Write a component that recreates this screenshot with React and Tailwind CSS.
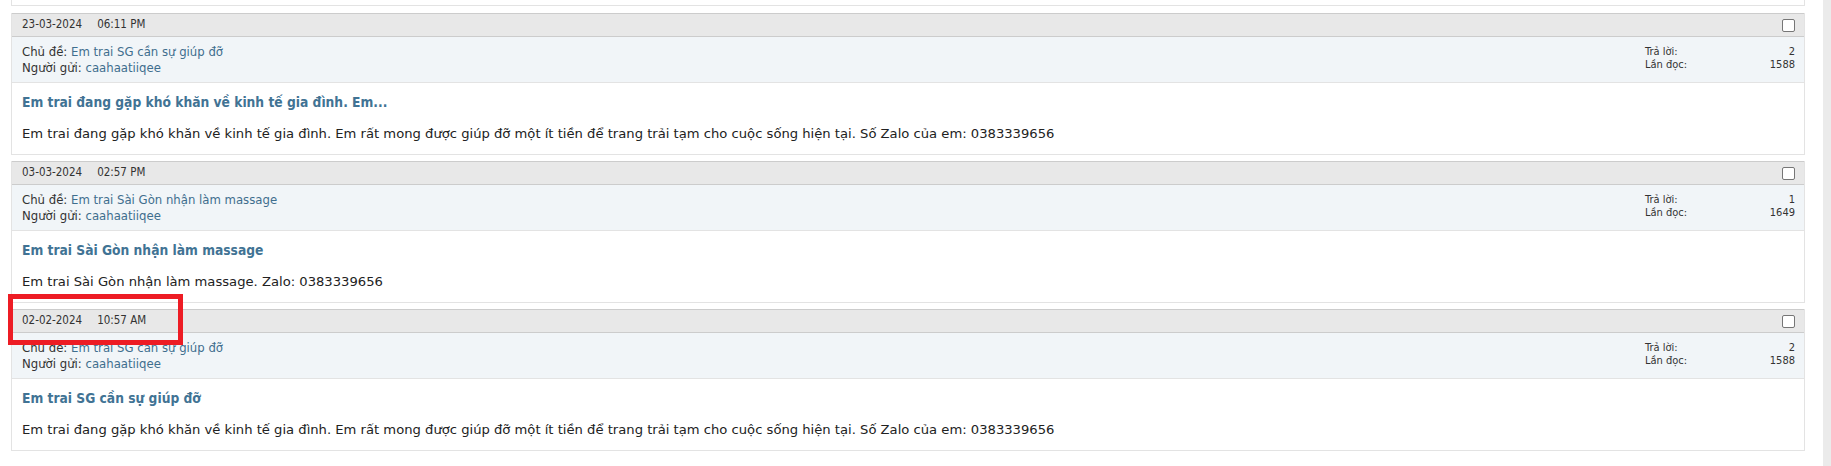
import React from "react";

const posts = [
  {
    date: "23-03-2024",
    time: "06:11 PM",
    topic: "Em trai SG cần sự giúp đỡ",
    user: "caahaatiiqee",
    replies: "2",
    views: "1588",
    title: "Em trai đang gặp khó khăn về kinh tế gia đình. Em...",
    body: "Em trai đang gặp khó khăn về kinh tế gia đình. Em rất mong được giúp đỡ một ít tiền để trang trải tạm cho cuộc sống hiện tại. Số Zalo của em: 0383339656",
  },
  {
    date: "03-03-2024",
    time: "02:57 PM",
    topic: "Em trai Sài Gòn nhận làm massage",
    user: "caahaatiiqee",
    replies: "1",
    views: "1649",
    title: "Em trai Sài Gòn nhận làm massage",
    body: "Em trai Sài Gòn nhận làm massage. Zalo: 0383339656",
  },
  {
    date: "02-02-2024",
    time: "10:57 AM",
    topic: "Em trai SG cần sự giúp đỡ",
    user: "caahaatiiqee",
    replies: "2",
    views: "1588",
    title: "Em trai SG cần sự giúp đỡ",
    body: "Em trai đang gặp khó khăn về kinh tế gia đình. Em rất mong được giúp đỡ một ít tiền để trang trải tạm cho cuộc sống hiện tại. Số Zalo của em: 0383339656",
  },
];

const cond = "font-['Tahoma','DejaVu_Sans_Condensed','DejaVu_Sans',sans-serif]";

function Post({ p }) {
  return (
    <div className="border-x border-b border-[#e3e3e3] bg-white">
      <div className={`flex h-[24px] items-center justify-between border-y border-[#cccccc] bg-[#e8e8e8] pl-[10px] pr-[9px] text-[11.5px] text-[#333] ${cond}`}>
        <div className="flex gap-[15px]">
          <span>{p.date}</span>
          <span>{p.time}</span>
        </div>
        <div className="h-[13px] w-[13px] rounded-[2px] border border-[#767676] bg-white" />
      </div>
      <div className={`flex h-[46px] items-center justify-between border-b border-[#e3e3e3] bg-[#f1f5f8] pl-[10px] pr-[9px] text-[#333] ${cond}`}>
        <div className="text-[13px] leading-[16px]">
          <div>
            Chủ đề: <span className="text-[#3f6e8e]">{p.topic}</span>
          </div>
          <div>
            Người gửi: <span className="text-[#3f6e8e]">{p.user}</span>
          </div>
        </div>
        <div className="mb-[3px] w-[150px] text-[11px] leading-[13px]">
          <div className="flex justify-between">
            <span>Trả lời:</span>
            <span>{p.replies}</span>
          </div>
          <div className="flex justify-between">
            <span>Lần đọc:</span>
            <span>{p.views}</span>
          </div>
        </div>
      </div>
      <div className="h-[71px] pl-[10px] pt-[11px]">
        <div className={`text-[13.7px] font-bold leading-[17px] text-[#417394] ${cond}`}>{p.title}</div>
        <div className="mt-[15px] font-['Verdana','DejaVu_Sans',sans-serif] text-[13.15px] leading-[16px] text-[#222]">
          {p.body}
        </div>
      </div>
    </div>
  );
}

export default function App() {
  return (
    <div className="relative flex h-[466px] w-[1831px] overflow-hidden bg-white">
      <div className="w-[1823px] pl-[11px] pr-[18px]">
        <div className="h-[6px] border-x border-b border-[#e3e3e3]" />
        <div className="mt-[7px] flex flex-col gap-[6px]">
          {posts.map((p, i) => (
            <Post key={i} p={p} />
          ))}
        </div>
      </div>
      <div className="w-[8px] bg-[#ebebeb]" />
      <div className="absolute left-[8px] top-[294px] h-[51px] w-[175px] border-[5px] border-[#ed1c24]" />
    </div>
  );
}
